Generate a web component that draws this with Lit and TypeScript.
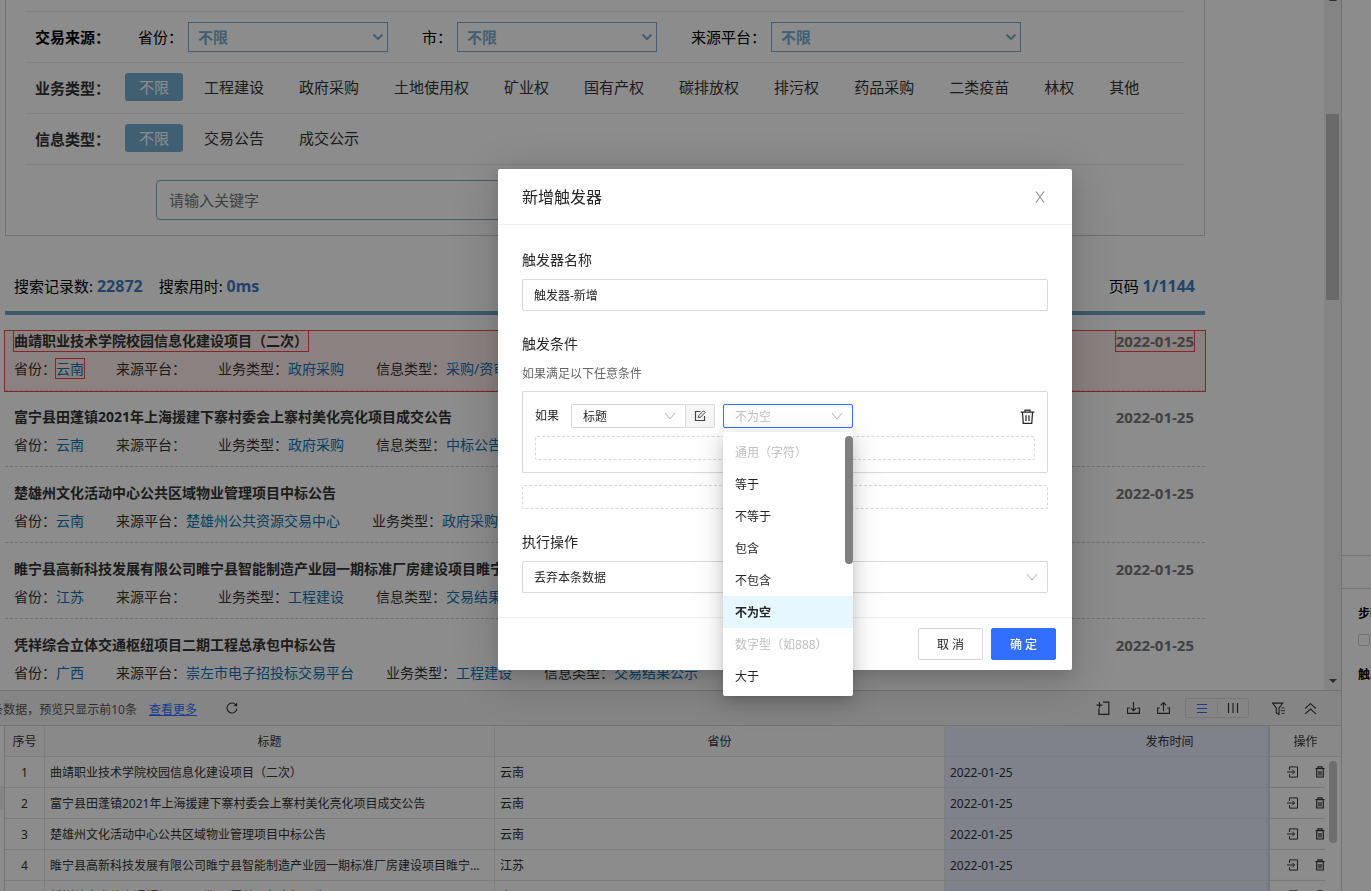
import { LitElement, html, css, svg, nothing } from "lit";
import { customElement, property, state } from "lit/decorators.js";
import { classMap } from "lit/directives/class-map.js";

const glyphs: Record<string, any> = {
  down: svg`<path d="M1 3l5 6 5-6" fill="none" stroke="currentColor" stroke-width="1"/>`,
  caret: svg`<path d="M1.500 3.500L6 8l4.500-4.500" fill="none" stroke="currentColor" stroke-width="2"/>`,
  close: svg`<path d="M2 .5l8 11M10 .5l-8 11" fill="none" stroke="currentColor" stroke-width="1.100"/>`,
  edit: svg`<path d="M6.500 1.500h-5v9h9v-4.500" fill="none" stroke="currentColor" stroke-width="1.200"/><path d="M4.300 7.700l.5-2.200 4.700-4.700 1.700 1.700-4.700 4.700z" fill="none" stroke="currentColor" stroke-width="1"/>`,
  trash: svg`<path d="M.5 2.500h11M4 2.500v-1.600h4v1.600M2 3l.6 8.400h6.800l.6-8.400M4.800 5v4.500M7.200 5v4.500" fill="none" stroke="currentColor" stroke-width="1"/>`,
  reload: svg`<path d="M10.200 3.200A5 5 0 1 0 11 6.700" fill="none" stroke="currentColor" stroke-width="1.100"/><path d="M11.200.6v3.700h-3.800z" fill="currentColor"/>`,
  addFile: svg`<path d="M6 .9h5v10.500h-8.500v-4.900M.5 3.500h5M3 1v5" fill="none" stroke="currentColor" stroke-width="1"/>`,
  download: svg`<path d="M6 0v8M3.500 5.600L6 8l2.500-2.400M2.500 5.500h-2v5h11v-5h-2" fill="none" stroke="currentColor" stroke-width="1"/>`,
  upload: svg`<path d="M6 8.500v-8M3.500 3L6 .6 8.500 3M2.500 5.500h-2v5h11v-5h-2" fill="none" stroke="currentColor" stroke-width="1"/>`,
  rows: svg`<path d="M1 2.500h10M1 6.500h10M1 10.500h10" fill="none" stroke="currentColor" stroke-width="1"/>`,
  cols: svg`<path d="M1.500 1v10M6 1v10M10.500 1v10" fill="none" stroke="currentColor" stroke-width="1.100"/>`,
  filter: svg`<path d="M.5 1h9.500L6.500 5.500v6l-2.500-1.500v-4.500z" fill="none" stroke="currentColor" stroke-width="1"/><path d="M9 5.500h2.500M8 8h4M9 10.500h2.500" stroke="currentColor" stroke-width=".8"/>`,
  up2: svg`<path d="M1 6l5-4.500L11 6M1 11l5-4.500 5 4.500" fill="none" stroke="currentColor" stroke-width="1"/>`,
  enter: svg`<path d="M2.500 4V.9h8v10.200h-8V8.200M0 6h7.500M5.300 3.700L7.600 6 5.300 8.300" fill="none" stroke="currentColor" stroke-width="1"/>`,
  bin: svg`<path d="M1.500 2.700h9M4 2.400V.9h4v1.500M2.700 3.500v7.500h6.600V3.500M5 5v4.500M7 5v4.500" fill="none" stroke="currentColor" stroke-width="1.200"/>`,
  tri: svg`<path d="M2 4h8L6 8z" fill="currentColor"/>`,
  triUp: svg`<path d="M2 8h8L6 4z" fill="currentColor"/>`,
};
const icon = (name: string, size = 12) =>
  html`<svg class="icon" width=${size} height=${size} viewBox="0 0 12 12" aria-hidden="true">${glyphs[name]}</svg>`;

const base = css`
  * { box-sizing: border-box; }
  button, input, select { font: inherit; color: inherit; margin: 0; }
  button { background: none; border: 0; padding: 0; cursor: pointer; }
  a { text-decoration: none; }
  .icon { display: block; }
`;

interface Notice {
  title: string;
  province: string;
  platform: string;
  business: string;
  info: string;
  date: string;
}

const notices: Notice[] = [
  { title: "曲靖职业技术学院校园信息化建设项目（二次）", province: "云南", platform: "", business: "政府采购", info: "采购/资审公告", date: "2022-01-25" },
  { title: "富宁县田蓬镇2021年上海援建下寨村委会上寨村美化亮化项目成交公告", province: "云南", platform: "", business: "政府采购", info: "中标公告", date: "2022-01-25" },
  { title: "楚雄州文化活动中心公共区域物业管理项目中标公告", province: "云南", platform: "楚雄州公共资源交易中心", business: "政府采购", info: "中标公告", date: "2022-01-25" },
  { title: "睢宁县高新科技发展有限公司睢宁县智能制造产业园一期标准厂房建设项目睢宁县交易结果公示", province: "江苏", platform: "", business: "工程建设", info: "交易结果公示", date: "2022-01-25" },
  { title: "凭祥综合立体交通枢纽项目二期工程总承包中标公告", province: "广西", platform: "崇左市电子招投标交易平台", business: "工程建设", info: "交易结果公示", date: "2022-01-25" },
];

@customElement("site-preview")
class SitePreview extends LitElement {
  static styles = [base, css`
    :host { display: flex; flex: 1; min-height: 0; overflow: hidden; background: #fff; color: #333; }
    .view { flex: 1; min-width: 0; overflow: hidden; padding-left: 5px; }
    .site { max-width: 1200px; }
    .filters { border: 1px solid #cfcfcf; border-top: 0; padding: 11px 20px 15px; font-size: 15px; line-height: 22px; }
    .line { display: flex; align-items: center; height: 51px; padding-left: 9px; border-top: 1px solid #eaeaea; }
    .line-name { width: 90px; font-weight: bold; color: #333; }
    .source { color: #000; }
    .field { display: flex; align-items: center; gap: 5px; margin-right: 34px; }
    .fields { display: flex; padding-left: 13px; }
    .pick { position: relative; color: #76adcf; }
    .pick select { display: block; appearance: none; width: 200px; height: 30px; padding: 0 24px 0 9px; border: 1px solid #76adcf; border-radius: 0; background: #fff; color: #76adcf; font-weight: bold; }
    .pick.wide select { width: 250px; }
    .pick .icon { position: absolute; right: 4px; top: 9px; }
    .chips { display: flex; gap: 7px; margin-bottom: 2px; }
    .chip { height: 28px; padding: 0 14px; border-radius: 3px; line-height: 28px; }
    .chip.on { background: #76adcf; color: #fff; }
    .search { border-top: 1px solid #eaeaea; padding: 15px 0 0 130px; }
    .search input { display: block; width: 700px; height: 40px; padding: 0 12px; border: 1px solid #76adcf; border-radius: 4px; background: #fff; }
    .search input::placeholder { color: #757575; opacity: 1; }
    .stats { display: flex; justify-content: space-between; align-items: center; height: 79px; padding: 24px 10px 0 9px; border-bottom: 4px solid #70a5bb; font-size: 15px; color: #000; }
    .stats strong { font-size: 16px; color: #3b7cc1; }
    .counts { display: flex; gap: 16px; }
    .list { list-style: none; margin: 0; padding: 0; }
    .item { height: 76px; padding: 16px 11px 0 9px; border-bottom: 1px dashed #ccc; font-size: 14px; line-height: 20px; }
    .head { display: flex; justify-content: space-between; }
    .title { font-weight: bold; color: #333; white-space: nowrap; }
    .date { font-size: 15px; font-weight: bold; color: #777; }
    .meta { display: flex; gap: 32px; margin-top: 8px; white-space: nowrap; }
    .meta a { color: #0b74b4; }
    .item.hit { height: 60px; margin-top: 16px; padding-top: 0; background: #fdebea; outline: 1px solid #f54545; }
    .hit .title, .hit .date, .hit .mark { outline: 1px solid #f54545; }
    .bar { display: flex; flex-direction: column; width: 17px; padding: 0 2px; background: #f1f1f1; }
    .thumb { height: 186px; background: #c1c1c1; }
    .before { height: 114px; overflow: hidden; }
    .after { flex: 1; }
    .arrow { color: #505050; height: 18px; display: flex; justify-content: center; align-items: center; }
    .before .arrow { margin-top: -10px; }
  `];

  private readonly business = ["不限", "工程建设", "政府采购", "土地使用权", "矿业权", "国有产权", "碳排放权", "排污权", "药品采购", "二类疫苗", "林权", "其他"];
  private readonly kinds = ["不限", "交易公告", "成交公示"];

  private pick(label: string, wide = false) {
    return html`<label class="field source"><span>${label}：</span>
      <span class=${classMap({ pick: true, wide })}><select><option>不限</option></select>${icon("caret")}</span></label>`;
  }
  private chips(list: string[]) {
    return html`<div class="chips">${list.map((t, i) => html`<button class=${classMap({ chip: true, on: i === 0 })}>${t}</button>`)}</div>`;
  }
  render() {
    return html`
      <div class="view"><div class="site">
        <section class="filters">
          <div class="line"><span class="line-name source">交易来源：</span>
            <div class="fields">${this.pick("省份")}${this.pick("市")}${this.pick("来源平台", true)}</div></div>
          <div class="line"><span class="line-name">业务类型：</span>${this.chips(this.business)}</div>
          <div class="line"><span class="line-name">信息类型：</span>${this.chips(this.kinds)}</div>
          <div class="search"><input type="text" aria-label="关键字" placeholder="请输入关键字"></div>
        </section>
        <div class="stats">
          <div class="counts"><span>搜索记录数: <strong>22872</strong></span><span>搜索用时: <strong>0ms</strong></span></div>
          <span>页码 <strong>1/1144</strong></span>
        </div>
        <ul class="list">${notices.map((n, i) => html`
          <li class=${classMap({ item: true, hit: i === 0 })}>
            <div class="head"><span class="title">${n.title}</span><span class="date">${n.date}</span></div>
            <div class="meta">
              <span>省份：<a class="mark" href="#">${n.province}</a></span>
              <span>来源平台：<a href="#">${n.platform}</a></span>
              <span>业务类型：<a href="#">${n.business}</a></span>
              <span>信息类型：<a href="#">${n.info}</a></span>
            </div>
          </li>`)}</ul>
      </div></div>
      <div class="bar">
        <div class="before"><div class="arrow">${icon("triUp")}</div></div>
        <div class="thumb"></div><div class="after"></div>
        <div class="arrow">${icon("tri")}</div>
      </div>`;
  }
}

@customElement("data-panel")
class DataPanel extends LitElement {
  static styles = [base, css`
    :host { display: block; height: 201px; overflow: hidden; background: #fff; border-top: 1px solid #d4d4d4; font-size: 12px; line-height: 20px; color: #333; }
    .tools { display: flex; align-items: center; height: 35px; padding: 0 24px 0 0; background: #f2f2f2; border-bottom: 1px solid #d4d4d4; color: #333; }
    .note { display: flex; justify-content: flex-end; width: 137px; padding-top: 3px; overflow: hidden; white-space: nowrap; color: #555; }
    .more { margin: 0 29px 0 12px; padding-top: 3px; color: #326eff; text-decoration: underline; }
    .grow { flex: 1; }
    .acts { display: flex; gap: 17px; align-items: center; }
    .seg { display: flex; align-items: center; height: 20px; margin: 0 23px 0 15px; border: 1px solid #d9d9d9; border-radius: 2px; }
    .seg button { display: flex; justify-content: center; width: 31px; }
    .seg .on { color: #326eff; }
    .seg button + button { border-left: 1px solid #e0e0e0; }
    .ends { display: flex; gap: 19px; }
    .body { position: relative; display: flex; height: 100%; }
    .side { width: 5px; padding-top: 60px; border-right: 1px solid #d4d4d4; }
    .grip { height: 24px; background: #efefef; }
    .scroll { flex: 1; min-width: 0; overflow: hidden; }
    table { width: 1461px; table-layout: fixed; border-collapse: separate; border-spacing: 0; }
    th, td { height: 31px; padding: 2px 5px 0; border-right: 1px solid #e8e8e8; border-bottom: 1px solid #e4e4e4; overflow: hidden; white-space: nowrap; text-overflow: ellipsis; text-align: left; font-weight: normal; }
    th { background: #f9f9f9; text-align: center; }
    .no { width: 40px; text-align: center; }
    .pin { width: 71px; position: sticky; right: 0; padding-top: 0; border-right: 0; background: #fff; box-shadow: -2px 0 3px rgba(0, 0, 0, 0.1); overflow: visible; }
    th.pin { padding-top: 2px; background: #f9f9f9; }
    .when { background: #e7edfb; }
    .ops { display: flex; gap: 15px; padding-left: 12px; }
    .gutter { position: absolute; top: 31px; right: 0; width: 16px; height: 100%; padding: 4px 4px 0; background: #fff; }
    .thumb { width: 8px; height: 82px; border-radius: 4px; background: #c9c9c9; }
  `];
  private act(name: string, label: string, size = 12) {
    return html`<button aria-label=${label}>${icon(name, size)}</button>`;
  }
  render() {
    return html`
      <div class="tools">
        <div class="note"><span>共10条数据，预览只显示前10条</span></div>
        <a class="more" href="#">查看更多</a>
        ${this.act("reload", "刷新")}
        <div class="grow"></div>
        <div class="acts">${this.act("addFile", "新增字段", 14)}${this.act("download", "导入", 13)}${this.act("upload", "导出", 13)}</div>
        <div class="seg"><button class="on" aria-label="行视图">${icon("rows")}</button><button aria-label="列视图">${icon("cols")}</button></div>
        <div class="ends">${this.act("filter", "筛选", 13)}${this.act("up2", "展开", 13)}</div>
      </div>
      <div class="body">
        <div class="side"><div class="grip"></div></div>
        <div class="scroll"><table>
          <thead><tr><th class="no">序号</th><th>标题</th><th>省份</th><th class="when">发布时间</th><th class="pin">操作</th></tr></thead>
          <tbody>${notices.map((n, i) => html`<tr>
            <td class="no">${i + 1}</td><td>${n.title}</td><td>${n.province}</td><td class="when">${n.date}</td>
            <td class="pin"><div class="ops">${this.act("enter", "进入")}${this.act("bin", "删除")}</div></td></tr>`)}</tbody>
        </table></div>
        <div class="gutter"><div class="thumb"></div></div>
      </div>`;
  }
}

@customElement("trigger-dialog")
class TriggerDialog extends LitElement {
  static styles = [base, css`
    :host { display: block; width: 574px; background: #fff; border-radius: 2px; color: #262626; font-size: 12px; line-height: 20px; box-shadow: 0 6px 16px rgba(0, 0, 0, 0.12), 0 9px 48px 8px rgba(0, 0, 0, 0.14); }
    header { display: flex; justify-content: space-between; align-items: center; height: 56px; padding: 0 26px 0 24px; border-bottom: 1px solid #f0f0f0; }
    h2 { margin: 0; font-size: 16px; font-weight: normal; line-height: 24px; }
    .close { color: #8c8c8c; }
    main { padding: 24px; }
    .label { display: block; margin-bottom: 8px; font-size: 14px; line-height: 22px; }
    .name, .pick select { display: block; width: 100%; height: 32px; padding: 0 11px; border: 1px solid #d9d9d9; border-radius: 2px; background: #fff; }
    .name, .slot { margin-bottom: 22px; }
    .pick { position: relative; }
    .pick select { appearance: none; padding-top: 1px; }
    .pick .icon { position: absolute; right: 10px; top: 50%; margin-top: -6px; color: #b5b5b5; }
    .hint { margin: 0; padding: 1px 0 7px; color: #666; }
    .group { padding: 12px; margin-bottom: 12px; border: 1px solid #d9d9d9; border-radius: 2px; }
    .rule { display: flex; align-items: center; margin-bottom: 8px; }
    .small select { height: 24px; }
    .key { width: 115px; margin-left: 12px; }
    .key select { border-radius: 2px 0 0 2px; }
    .tag { display: flex; align-items: center; justify-content: center; width: 29px; height: 24px; margin-right: 8px; border: 1px solid #d9d9d9; border-left: 0; border-radius: 0 2px 2px 0; background: #f5f5f5; color: #444; }
    .test { width: 130px; }
    .test > select { border-color: #326eff; color: #bfbfbf; }
    .remove { margin-left: auto; }
    .slot { height: 24px; border: 1px dashed #d9d9d9; border-radius: 2px; }
    .group .slot { margin: 0; }
    footer { display: flex; justify-content: flex-end; gap: 8px; padding: 10px 16px; border-top: 1px solid #f0f0f0; }
    .btn { width: 65px; height: 32px; padding-top: 1px; border: 1px solid #d9d9d9; border-radius: 2px; }
    .primary { border-color: #326eff; background: #326eff; color: #fff; font-weight: 500; }
    .menu { position: absolute; z-index: 1; top: 28px; left: 0; width: 100%; margin: 0; padding: 4px 0; list-style: none; background: #fff; border-radius: 2px; box-shadow: 0 3px 6px -4px rgba(0, 0, 0, 0.2), 0 6px 16px rgba(0, 0, 0, 0.16), 0 9px 28px 8px rgba(0, 0, 0, 0.08); }
    .opt { height: 32px; padding: 7px 12px 0; white-space: nowrap; }
    .off { color: #bfbfbf; }
    .on { background: #e6f7ff; font-weight: bold; }
    .track { position: absolute; top: 4px; right: 0; width: 8px; height: 128px; border-radius: 4px; background: #808080; }
  `];
  @property() name = "触发器-新增";
  @state() private test = "不为空";
  private readonly options: [string, boolean][] = [["通用（字符）", true], ["等于", false], ["不等于", false], ["包含", false], ["不包含", false], ["不为空", false], ["数字型（如888）", true], ["大于", false]];

  render() {
    return html`
      <header><h2>新增触发器</h2><button class="close" aria-label="关闭">${icon("close")}</button></header>
      <main>
        <label class="label" for="name">触发器名称</label>
        <input class="name" id="name" type="text" .value=${this.name}>
        <span class="label">触发条件</span>
        <p class="hint">如果满足以下任意条件</p>
        <div class="group">
          <div class="rule">
            <label for="key">如果</label>
            <div class="pick small key"><select id="key"><option>标题</option></select>${icon("down")}</div>
            <button class="tag" aria-label="编辑字段">${icon("edit")}</button>
            <div class="pick small test">
              <select aria-label="条件"><option>${this.test}</option></select>${icon("down")}
              <ul class="menu" role="listbox">
                ${this.options.map(([t, off]) => html`<li role="option" aria-disabled=${off ? "true" : nothing} class=${classMap({ opt: true, off, on: t === this.test })} @click=${() => { if (!off) this.test = t; }}>${t}</li>`)}
                <li class="track" role="presentation"></li>
              </ul>
            </div>
            <button class="remove" aria-label="删除条件">${icon("trash", 15)}</button>
          </div>
          <div class="slot"></div>
        </div>
        <div class="slot"></div>
        <label class="label" for="action">执行操作</label>
        <div class="pick"><select id="action"><option>丢弃本条数据</option></select>${icon("down")}</div>
      </main>
      <footer><button class="btn">取 消</button><button class="btn primary">确 定</button></footer>`;
  }
}

@customElement("app-root")
class AppRoot extends LitElement {
  static styles = [base, css`
    :host { display: flex; height: 100vh; overflow: hidden; font-family: "Noto Sans", "Noto Sans CJK SC", sans-serif; background: #fff; }
    .work { display: flex; flex-direction: column; flex: 1; min-width: 0; }
    .props { display: flex; flex-direction: column; width: 30px; overflow: hidden; border-left: 1px solid #d4d4d4; font-size: 12px; line-height: 20px; white-space: nowrap; color: #000; }
    .space { height: 555px; }
    .tab { height: 34px; border: 1px solid #d9d9d9; border-width: 1px 0; }
    .steps { display: flex; flex-direction: column; align-items: flex-start; padding: 15px 0 0 16px; }
    .steps strong { display: block; }
    .steps input { appearance: none; width: 12px; height: 12px; margin: 10px 0 19px; border: 1px solid #d0d0d0; border-radius: 2px; }
    .mask { position: fixed; inset: 0; background: rgba(0, 0, 0, 0.45); }
    .dialog { position: absolute; top: 169px; right: 299px; }
  `];
  render() {
    return html`
      <div class="work"><site-preview></site-preview><data-panel></data-panel></div>
      <aside class="props">
        <div class="space"></div><div class="tab"></div>
        <div class="steps"><strong>步骤</strong><input type="checkbox" aria-label="步骤"><strong>触发器</strong></div>
      </aside>
      <div class="mask"><trigger-dialog class="dialog" role="dialog" aria-label="新增触发器"></trigger-dialog></div>`;
  }
}
